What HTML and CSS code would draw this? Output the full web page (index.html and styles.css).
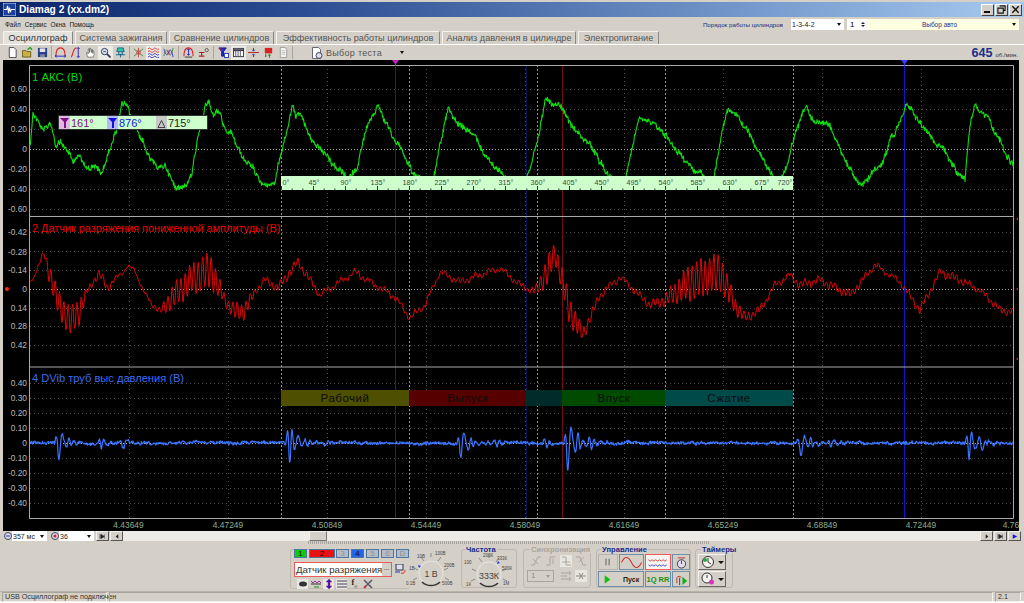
FILE: index.html
```html
<!DOCTYPE html>
<html lang="ru">
<head>
<meta charset="utf-8">
<title>Diamag 2 (xx.dm2)</title>
<link rel="stylesheet" href="styles.css">
</head>
<body>
<div class="app">
  <header class="titlebar">
    <svg class="appicon" viewBox="0 0 14 14"><rect width="14" height="14" fill="#1c3f9c" stroke="#dfe6f5"/><path d="M1 7h3l1-4 1 8 1-6 1 4 1-2h4" fill="none" stroke="#fff" stroke-width="1.2"/></svg>
    <span class="apptitle">Diamag 2 (xx.dm2)</span>
    <div class="winbtns">
      <span class="winbtn"><i class="w-min"></i></span>
      <span class="winbtn"><svg viewBox="0 0 10 10"><path d="M3 1h6v5H7M1 3.5h6V9H1z" fill="none" stroke="#111" stroke-width="1.2"/></svg></span>
      <span class="winbtn"><svg viewBox="0 0 10 10"><path d="M1.5 1.5l7 7M8.5 1.5l-7 7" stroke="#111" stroke-width="1.5"/></svg></span>
    </div>
  </header>

  <div class="menubar">
    <nav class="menu"><span>Файл</span><span>Сервис</span><span>Окна</span><span>Помощь</span></nav>
    <div class="menu-right">
      <span class="order-label">Порядок работы цилиндров</span>
      <span class="combo order"><b>1-3-4-2</b><i class="arrow"></i></span>
      <span class="spin"><b>1</b><span class="spinarrows"><i></i><i></i></span></span>
      <span class="auto"><b>Выбор авто</b><i class="arrow"></i></span>
    </div>
  </div>

  <div class="tabs">
    <span class="tab active w1">Осциллограф</span>
    <span class="tab w2">Система зажигания</span>
    <span class="tab w3">Сравнение цилиндров</span>
    <span class="tab w4">Эффективность работы цилиндров</span>
    <span class="tab w5">Анализ давления в цилиндре</span>
    <span class="tab w6">Электропитание</span>
  </div>

  <div class="toolbar">
    <span class="tb"><svg viewBox="0 0 12 12"><path d="M2.5 .5h5l2.5 2.5v8.500h-7.500z" fill="#fff" stroke="#444"/></svg></span>
    <span class="tb"><svg viewBox="0 0 12 12"><path d="M.5 4h4l1 1h4v6h-9z" fill="#c8b04a" stroke="#6b5a14"/><path d="M6 3l3-2.500 2 2.500" fill="none" stroke="#22a022" stroke-width="1.5"/></svg></span>
    <span class="tb"><svg viewBox="0 0 12 12"><path d="M1 1h10v10H1z" fill="#27408f"/><path d="M3 1.500h6v4H3z" fill="#e4e4e4"/><path d="M3.500 8h5v3h-5z" fill="#8a8a8a"/></svg></span>
    <i class="sep"></i>
    <span class="tb"><svg viewBox="0 0 12 12"><path d="M1 10C1 3 3 1 6 1s5 2 5 9" fill="none" stroke="#d22" stroke-width="1.2"/><path d="M0 10h12M1.500 8.500L0 10l1.500 1.500M10.500 8.500L12 10l-1.500 1.500" fill="none" stroke="#22c"/></svg></span>
    <span class="tb"><svg viewBox="0 0 12 12"><path d="M1 11C3 11 3 1 7 1" fill="none" stroke="#d22" stroke-width="1.2"/><path d="M9 .5v11M7.500 2L9 .5 10.500 2M7.500 10L9 11.500 10.500 10" fill="none" stroke="#22c"/></svg></span>
    <span class="tb"><svg viewBox="0 0 12 12"><path d="M3 11L1.500 6.500l1-.5 1 1.500V2l1 0 .5 4V1.500h1L7 6V2.500h1L8.500 7V4h1l.5 4-1 3z" fill="#fff" stroke="#555" stroke-width=".7"/></svg></span>
    <span class="tb on"><svg viewBox="0 0 12 12"><circle cx="5" cy="5" r="3.500" fill="#bfe4f5" stroke="#335"/><path d="M7.500 7.500l4 4" stroke="#335" stroke-width="1.8"/><path d="M3.500 5h3" stroke="#c22"/></svg></span>
    <span class="tb"><svg viewBox="0 0 12 12"><path d="M3 1h6l1 4H2z" fill="#30c8a8" stroke="#168"/><path d="M4 5v3h4V5M1 8.500h10M6 8v3.500" stroke="#168" fill="none"/></svg></span>
    <i class="sep"></i>
    <span class="tb"><svg viewBox="0 0 12 12"><path d="M1 2l10 8M11 2L1 10" stroke="#3a8a3a"/><path d="M6 1v10" stroke="#c44"/><circle cx="6" cy="6" r="2" fill="none" stroke="#c44"/></svg></span>
    <span class="tb on"><svg viewBox="0 0 12 12"><path d="M0 2q1.500-2 3 0t3 0 3 0 3 0M0 5q1.500-2 3 0t3 0 3 0 3 0" fill="none" stroke="#d33"/><path d="M0 8q1.500-2 3 0t3 0 3 0 3 0M0 11q1.500-2 3 0t3 0 3 0 3 0" fill="none" stroke="#33c"/></svg></span>
    <span class="tb"><svg viewBox="0 0 12 12"><path d="M1 10C2 2 5 2 6 6s3 5 5-5" fill="none" stroke="#3a8a3a"/><path d="M1 2c2 8 4 8 5 4s3-5 5 5" fill="none" stroke="#33c"/><circle cx="6" cy="6" r="1.500" fill="none" stroke="#c44"/></svg></span>
    <i class="sep wide"></i>
    <span class="tb"><svg viewBox="0 0 12 12"><path d="M1 10C1 3 3 1 6 1s5 2 5 9" fill="none" stroke="#d22" stroke-width="1.2"/><path d="M6 2v7M4.500 3.500L6 2l1.500 1.500M4.500 7.500L6 9l1.500-1.500" fill="none" stroke="#22c"/><path d="M2 11h8" stroke="#333"/></svg></span>
    <span class="tb"><svg viewBox="0 0 12 12"><path d="M1 6h6M1 10h6" stroke="#a22" stroke-width="1.2"/><path d="M4 6.500v3" stroke="#333"/><circle cx="9.500" cy="3.500" r="1.800" fill="none" stroke="#555"/></svg></span>
    <i class="sep wide"></i>
    <span class="tb"><svg viewBox="0 0 12 12"><path d="M1 1h8L6 5v5H4V5z" fill="#23c" stroke="#118"/><rect x="7" y="7" width="4.500" height="4.500" fill="#fff" stroke="#23c"/><path d="M1 1l3 3" stroke="#c22" stroke-width="1.2"/></svg></span>
    <span class="tb on"><svg viewBox="0 0 12 12"><rect x=".5" y="1.500" width="11" height="9" fill="#fff" stroke="#334"/><path d="M.5 3.500h11" stroke="#334" stroke-width="2"/><path d="M3 1.500v9M5.500 1.500v9M8 1.500v9" stroke="#556"/></svg></span>
    <span class="tb"><svg viewBox="0 0 12 12"><path d="M0 6h12" stroke="#a22"/><path d="M6 1v3M6 8v3M4.500 3L6 4.500 7.500 3M4.500 9L6 7.500 7.500 9" fill="none" stroke="#33a"/></svg></span>
    <span class="tb"><svg viewBox="0 0 12 12"><path d="M2 1h8v6H2z" fill="#d22"/><path d="M7 8v4M5.500 9.500L7 8l1.500 1.500" stroke="#282" fill="none"/><path d="M3 8v3" stroke="#333"/></svg></span>
    <span class="tb"><svg viewBox="0 0 12 12"><path d="M2.500 .5h5l2 2v9h-7z" fill="#f6f4ee" stroke="#999"/><path d="M4 4h4M4 6h4M4 8h4" stroke="#bbb"/></svg></span>
    <i class="sep"></i>
    <span class="testpick">
      <svg viewBox="0 0 12 12"><path d="M1.500 .5h6l2 2v9h-8z" fill="#fff" stroke="#667"/><circle cx="8" cy="8.500" r="3" fill="#dde" stroke="#445"/></svg>
      <b>Выбор теста</b><i class="arrow"></i>
    </span>
    <span class="rpm"><b>645</b><small>об./мин.</small></span>
  </div>

  <svg class="scope" viewBox="3 60 1016 471" preserveAspectRatio="none">
    <rect x="3" y="60" width="1016" height="471" fill="#000"/>
    <g id="grid"></g>
    <g class="cursors">
      <path class="yel" d="M281.5 65V518M409.5 65V518M537.5 65V518M665.5 65V518M793.5 65V518"/>
      <path stroke="#4a1055" d="M395.5 65V518"/>
      <path stroke="#0e0e55" d="M526.5 65V518"/>
      <path stroke="#701010" d="M562.5 65V518"/>
      <path stroke="#1414c8" d="M904.5 65V518"/>
    </g>
    <path d="M29.5 65.5H1013.5V518.5H29.5ZM29 216.5H1013M29 367H1013" fill="none" stroke="#a8a8a8"/>
    <path d="M392 60h7l-3 4v2h-1v-2z" fill="#c020c0"/>
    <path d="M901 60h7l-3 4v2h-1v-2z" fill="#3a3aff"/>

    <rect x="281" y="390" width="128" height="16" fill="#4f4f00"/>
    <rect x="409" y="390" width="117" height="16" fill="#560000"/>
    <rect x="526" y="390" width="36" height="16" fill="#002b2b"/>
    <rect x="562" y="390" width="103" height="16" fill="#004b00"/>
    <rect x="665" y="390" width="128" height="16" fill="#004a4a"/>
    <g class="phase">
      <text x="345" y="402">Рабочий</text>
      <text x="468" y="402">Выпуск</text>
      <text x="614" y="402">Впуск</text>
      <text x="729" y="402">Сжатие</text>
    </g>

    <polyline id="t1" class="trace green"/>
    <polyline id="t2" class="trace red"/>
    <polyline id="t3" class="trace blue"/>

    <g class="ptitle">
      <text x="32" y="81" fill="#00d800">1 АКС (В)</text>
      <text class="t-long" x="32" y="232" fill="#f00000">2 Датчик разряжения пониженной амплитуды (В)</text>
      <text class="t-mid" x="32" y="382" fill="#3a6cf0">4 DVib труб выс давления (В)</text>
    </g>

    <g class="ylab">
      <text x="27" y="92">0.60</text><text x="27" y="112">0.40</text><text x="27" y="132">0.20</text><text x="27" y="152">0</text><text x="27" y="172">-0.20</text><text x="27" y="192">-0.40</text><text x="27" y="212">-0.60</text>
      <text x="27" y="235">-0.42</text><text x="27" y="255">-0.28</text><text x="27" y="273">-0.14</text><text x="27" y="292">0</text><text x="27" y="311">0.14</text><text x="27" y="329">0.28</text><text x="27" y="348">0.42</text>
      <text x="27" y="386">0.40</text><text x="27" y="401">0.30</text><text x="27" y="416">0.20</text><text x="27" y="431">0.10</text><text x="27" y="446">0</text><text x="27" y="461">-0.10</text><text x="27" y="476">-0.20</text><text x="27" y="491">-0.30</text><text x="27" y="506">-0.40</text>
    </g>
    <g class="xlab">
      <text x="128.5" y="528">4.43649</text><text x="228" y="528">4.47249</text><text x="327" y="528">4.50849</text><text x="426" y="528">4.54449</text><text x="525" y="528">4.58049</text><text x="624" y="528">4.61649</text><text x="723" y="528">4.65249</text><text x="822" y="528">4.68849</text><text x="921" y="528">4.72449</text><text x="1011" y="528">4.76</text>
    </g>
    <circle cx="7" cy="289" r="2" fill="#ff2020"/>
    <path d="M1016 219l2-1.500v3zM1016 289l2-1.500v3zM1016 359l2-1.500v3z" fill="#d02020"/>

    <g id="scale"><rect x="281" y="176" width="512" height="14" fill="#ccffcc"/><path id="ticks" stroke="#333" fill="none"/></g>

    <rect x="58.5" y="115.5" width="149" height="14" fill="#ccffcc" stroke="#333"/>
    <rect x="59" y="116" width="11" height="13" fill="#e0b8e0"/>
    <rect x="107" y="116" width="11" height="13" fill="#b8b8f8"/>
    <rect x="156" y="116" width="11" height="13" fill="#c8c8c8"/>
    <path d="M60 118h9l-3 4v6h-2v-6z" fill="#801080"/>
    <path d="M108 118h9l-3 4v6h-2v-6z" fill="#1010e0"/>
    <path d="M158 127.5l3.500-7 3.500 7z" fill="none" stroke="#444"/>
    <g class="tagtext">
      <text x="71" y="127" fill="#801080">161°</text>
      <text x="119" y="127" fill="#1020e0">876°</text>
      <text x="168" y="127" fill="#222">715°</text>
    </g>
  </svg>

  <div class="scrollrow">
    <span class="ricon"><svg viewBox="0 0 8 8"><circle cx="4" cy="4" r="3.500" fill="#dde" stroke="#446"/><path d="M2 4h4" stroke="#33a"/></svg></span>
    <span class="combo c-time"><b>357 мс</b><i class="arrow"></i></span>
    <span class="ricon"><svg viewBox="0 0 8 8"><circle cx="4" cy="4" r="3.500" fill="#dde" stroke="#446"/><circle cx="4" cy="4" r="1.600" fill="#c22"/></svg></span>
    <span class="combo c-num"><b>36</b><i class="arrow"></i></span>
    <span class="sbtn"><svg viewBox="0 0 9 5"><path d="M1 0v5M6 0v5M6 2.500L2 0v5z" fill="#222" stroke="#222" stroke-width=".6"/></svg></span>
    <span class="sbtn"><svg viewBox="0 0 9 5"><path d="M6 0v5L3 2.500z" fill="#222"/></svg></span>
    <span class="track"><i class="thumb"></i></span>
    <span class="sbtn"><svg viewBox="0 0 9 5"><path d="M3 0v5l3-2.500z" fill="#222"/></svg></span>
    <span class="sbtn"><svg viewBox="0 0 9 5"><path d="M8 0v5M3 0v5M3 2.500L7 0v5z" fill="#222" stroke="#222" stroke-width=".6" transform="matrix(-1 0 0 1 9 0)"/></svg></span>
    <span class="sbtn"><svg viewBox="0 0 9 5"><path d="M2 0v5l5-2.500z" fill="#1414e0"/></svg></span>
  </div>

  <div class="controls">
    <div class="strip"><i></i></div>
    <div class="groups">
      <div class="gbox g-chan">
        <div class="chans">
          <span class="chan c1">1</span><span class="chan c2">2</span><span class="chan off c3">3</span><span class="chan c4">4</span><span class="chan off c5">5</span><span class="chan off c6">6</span><span class="chan off c7">D</span>
        </div>
        <div class="sensor">
          <span class="sensorbox"><b>Датчик разряжения</b><i class="dots">...</i></span>
          <svg class="sicon" viewBox="0 0 11 11"><rect x="1" y="0" width="7" height="6" fill="#dde" stroke="#334"/><path d="M0 8h5" stroke="#23c"/><path d="M6 9c3 1 4-1 4-3" fill="none" stroke="#d22"/></svg>
        </div>
        <div class="chantools">
          <span class="ct lit"><svg viewBox="0 0 10 10"><ellipse cx="5" cy="5" rx="4" ry="2.500" fill="#333"/></svg></span>
          <span class="ct"><svg viewBox="0 0 10 10"><path d="M0 2l2 2 2-2 2 2 2-2 2 2" fill="none" stroke="#a030a0"/><path d="M0 5h10" stroke="#333"/><path d="M3 8h5" stroke="#282"/></svg></span>
          <span class="ct lit"><svg viewBox="0 0 10 10"><path d="M5 0l3 3H6v4h2l-3 3-3-3h2V3H2z" fill="#2020c0" stroke="#c02060" stroke-width=".5"/></svg></span>
          <span class="ct lit"><svg viewBox="0 0 10 10"><path d="M0 2h10M0 5h10M0 8h10" stroke="#445"/></svg></span>
          <span class="ct"><em>f<sub>∞</sub></em></span>
          <span class="ct"><svg viewBox="0 0 10 10"><path d="M1 1l8 8M9 1L1 9" stroke="#556" stroke-width="1.5"/><circle cx="2" cy="8" r="1.200" fill="#c33"/></svg></span>
        </div>
      </div>
      <div class="knob k1">
        <svg viewBox="0 0 50 40">
          <g class="ticks"><path d="M7 31l4-2M8 19l4 2M15 8l3 4M25 4v4M35 8l-3 4M42 19l-4 2M43 31l-4-2"/></g>
          <path d="M17 33a12 12 0 1 1 16 0" fill="#d4d0c8" stroke="#e8e6e0" stroke-width="1"/>
          <path d="M16 33a13 13 0 0 0 18 0" fill="none" stroke="#333" stroke-width="1.5"/>
          <path d="M15 17l-3-1 1 3z" fill="#1a3ae0"/>
          <text class="kc" x="25" y="28">1 В</text>
          <text class="kl" x="0" y="36">0.1В</text><text class="kl" x="3" y="21">1В</text><text class="kl" x="11" y="9">10В</text><text class="kl" x="29" y="6">100В</text><text class="kl" x="38" y="18">200В</text><text class="kl" x="36" y="36">500В</text>
        </svg>
      </div>
      <fieldset class="gbox g-freq">
        <legend class="gtitle">Частота</legend>
        <div class="knob k2">
          <svg viewBox="0 0 50 40">
            <g class="ticks"><path d="M7 31l4-2M8 19l4 2M15 8l3 4M25 4v4M35 8l-3 4M42 19l-4 2M43 31l-4-2"/></g>
            <path d="M17 33a12 12 0 1 1 16 0" fill="#d4d0c8" stroke="#e8e6e0"/>
            <path d="M16 33a13 13 0 0 0 18 0" fill="none" stroke="#333" stroke-width="1.5"/>
            <path d="M33 14l1-3 2 2z" fill="#1a3ae0"/>
            <text class="kc" x="25" y="29">333К</text>
            <text class="kl" x="2" y="36">1К</text><text class="kl" x="0" y="14">100</text><text class="kl" x="19" y="7">200К</text><text class="kl" x="33" y="10">333К</text><text class="kl" x="38" y="20">500К</text><text class="kl" x="39" y="35">1М</text>
          </svg>
        </div>
      </fieldset>
      <fieldset class="gbox g-sync">
        <legend class="gtitle dim">Синхронизация</legend>
        <div class="syncrow">
          <span class="si"><svg viewBox="0 0 10 10"><path d="M0 9h3L7 1h3M2 3l5 5" fill="none" stroke="#aaa6a0"/></svg></span>
          <span class="si"><svg viewBox="0 0 10 10"><path d="M0 9h4V1h5M7 3v5" fill="none" stroke="#aaa6a0"/></svg></span>
          <span class="si lit"><svg viewBox="0 0 10 10"><path d="M1 1h4v8h5M1 6h8" fill="none" stroke="#aaa6a0"/></svg></span>
          <span class="si"><svg viewBox="0 0 10 10"><path d="M0 1h4l3 8h3M3 6l5-5" fill="none" stroke="#aaa6a0"/></svg></span>
        </div>
        <div class="syncrow low">
          <span class="sel">1<i class="arrow dimarrow"></i></span>
          <span class="si"><svg viewBox="0 0 10 10"><path d="M0 2h10M0 5h6M0 8h10M8 0l2 2-2 2M8 6l2 2-2 2" fill="none" stroke="#aaa6a0"/></svg></span>
          <span class="si lit"><svg viewBox="0 0 10 10"><path d="M0 5h10M3 2l2 3-2 3M7 2L5 5l2 3" fill="none" stroke="#8d8983"/></svg></span>
        </div>
      </fieldset>
      <fieldset class="gbox g-ctl">
        <legend class="gtitle">Управление</legend>
        <div class="ctlgrid">
          <span class="cb pause"><svg viewBox="0 0 10 10"><path d="M2.500 1v8M6.500 1v8" stroke="#888" stroke-width="2"/></svg></span>
          <span class="cb sine"><svg viewBox="0 0 22 12"><path d="M0 6q5.500-11 11 0t11 0" fill="none" stroke="#c83030" stroke-width="1.1"/></svg></span>
          <span class="cb wave"><svg viewBox="0 0 22 12"><path d="M0 3l2 1.500 2-1.500 2 1.500 2-1.500 2 1.500 2-1.500 2 1.500 2-1.500 2 1.500 2-1.500" fill="none" stroke="#c83030" stroke-width=".9"/><path d="M0 8.500l2 1.500 2-1.500 2 1.500 2-1.500 2 1.500 2-1.500 2 1.500 2-1.500 2 1.500 2-1.500" fill="none" stroke="#3030c8" stroke-width=".9"/></svg></span>
          <span class="cb tim"><svg viewBox="0 0 14 14"><circle cx="7" cy="8.500" r="4.500" fill="#dde" stroke="#334"/><path d="M7 8.500V5" stroke="#23c"/><path d="M3 2h8" stroke="#b33"/></svg></span>
          <span class="cb start"><svg viewBox="0 0 10 14"><path d="M1 1l8 6-8 6z" fill="#12c012"/></svg><b>Пуск</b></span>
          <span class="cb rr"><b>1Q RR</b></span>
          <span class="cb tim"><svg viewBox="0 0 14 14"><path d="M2 11V5a3 3 0 0 1 5 0" fill="none" stroke="#b33"/><path d="M5 5v8" stroke="#23c"/><path d="M8 4l5 4.500-5 4.500z" fill="#12b012"/></svg></span>
        </div>
      </fieldset>
      <fieldset class="gbox g-tim">
        <legend class="gtitle">Таймеры</legend>
        <span class="tbtn"><svg viewBox="0 0 14 14"><circle cx="7" cy="7" r="5.500" fill="#f4f4ee" stroke="#333"/><path d="M7 7V3M7 7l3 2" stroke="#333"/><circle cx="4" cy="5" r="2" fill="#28a050"/></svg><i class="arrow"></i></span>
        <span class="tbtn"><svg viewBox="0 0 14 14"><circle cx="6" cy="6" r="5" fill="#f4f4ee" stroke="#333"/><path d="M6 6V3" stroke="#333"/><circle cx="10.500" cy="10" r="2.500" fill="#e030c0"/></svg><i class="arrow"></i></span>
      </fieldset>
    </div>
  </div>

  <footer class="status">
    <span class="st s1">USB Осциллограф не подключен</span>
    <span class="st s2"></span>
    <span class="st s3">2.1</span>
  </footer>
</div>
<script src="script.js"></script>
</body>
</html>
```
FILE: styles.css
```css
* { box-sizing: border-box; }
html, body { margin: 0; padding: 0; background: #fff; }
body { width: 1024px; height: 603px; overflow: hidden; font-family: "Liberation Sans", Arial, sans-serif; }
i, em { font-style: normal; }
b { font-weight: normal; }
svg { display: block; }

.app { width: 1024px; height: 601px; display: flex; flex-direction: column; background: #d4d0c8; padding-top: 2px; }

.titlebar { flex: 0 0 15px; display: flex; align-items: center; background: linear-gradient(90deg, #0a246a 0%, #2c4d92 30%, #6f93c6 70%, #a6caf0 100%); padding: 0 2px 0 3px; }
.appicon { width: 13px; height: 13px; margin-right: 3px; }
.apptitle { color: #fff; font-weight: bold; font-size: 10.2px; }
.winbtns { margin-left: auto; display: flex; gap: 1px; }
.winbtn { width: 13px; height: 12px; background: #d4d0c8; border: 1px solid; border-color: #fff #404040 #404040 #fff; display: flex; align-items: center; justify-content: center; }
.winbtn svg { width: 9px; height: 9px; }
.w-min { width: 6px; height: 2px; background: #111; margin-top: 5px; margin-left: -2px; }

.menubar { flex: 0 0 14px; display: flex; align-items: center; padding: 0 5px; }
.menu { display: flex; gap: 4px; font-size: 6.4px; color: #222; }
.menu-right { margin-left: auto; display: flex; align-items: center; height: 11px; }
.order-label { font-size: 6.2px; color: #1a2a80; margin-right: 8px; }
.combo { display: flex; align-items: center; background: #fff; font-size: 7px; padding-left: 1px; color: #222; }
.combo b { flex: 1; white-space: nowrap; }
.combo.order { width: 53px; height: 11px; }
.arrow { display: block; width: 0; height: 0; border: 2px solid transparent; border-top: 3px solid #111; border-bottom: 0; margin-right: 3px; }
.spin { width: 20px; height: 11px; margin-left: 3px; background: #fff; font-size: 8px; display: flex; align-items: center; padding-left: 3px; }
.spin b { flex: 1; }
.spinarrows { display: flex; flex-direction: column; gap: 1px; margin-right: 2px; }
.spinarrows i { display: block; border: 2px solid transparent; border-bottom: 2px solid #222; border-top: 0; }
.spinarrows i + i { border-bottom: 0; border-top: 2px solid #222; }
.auto { width: 152px; height: 11px; background: #ffffe1; font-size: 6.5px; color: #223088; display: flex; align-items: center; }
.auto b { flex: 1; text-align: center; }

.tabs { flex: 0 0 14px; display: flex; gap: 2px; padding-left: 3px; align-items: flex-end; border-bottom: 1px solid #fff; }
.tab { height: 13px; font-size: 9.15px; line-height: 13px; text-align: center; color: #555; background: #d4d0c8; border: 1px solid #f4f2ec; border-right-color: #888; border-bottom: 0; white-space: nowrap; overflow: hidden; }
.tab.active { color: #333; background: #e4e2dc; }
.w1 { width: 70px; } .w2 { width: 92px; } .w3 { width: 105px; } .w4 { width: 164px; } .w5 { width: 134px; } .w6 { width: 81px; }

.toolbar { flex: 0 0 15px; display: flex; align-items: center; padding-left: 5px; }
.tb { width: 15px; height: 14px; display: flex; align-items: center; justify-content: center; }
.tb svg { width: 11px; height: 11px; }
.tb.on { background: #ecebe6; }
.sep { width: 3px; height: 13px; flex: none; display: flex; justify-content: center; }
.sep::after { content: ""; width: 1px; background: #aaa69e; }
.sep.wide { width: 5px; }
.testpick { display: flex; align-items: center; margin-left: 17px; width: 96px; font-size: 9px; color: #555; letter-spacing: .3px; }
.testpick svg { width: 12px; height: 12px; margin-right: 3px; }
.testpick b { flex: 1; }
.rpm { margin-left: auto; margin-right: 6px; display: flex; align-items: baseline; color: #1c2d8a; }
.rpm b { font-size: 12.5px; font-weight: bold; }
.rpm small { font-size: 6px; margin-left: 3px; color: #333; }

.scope { flex: 0 0 471px; width: 1016px; margin-left: 3px; height: 471px; }
#grid path { fill: none; stroke: #4c4c4c; stroke-dasharray: 1 3; }
#grid path.zero { stroke: #a8a8a8; stroke-dasharray: 1 2; }
.cursors path { fill: none; stroke-width: 1; }
.cursors .yel { stroke: #a0a030; stroke-dasharray: 2 2; }
.trace { fill: none; stroke-linejoin: round; }
.green { stroke: #12dc12; stroke-width: 1.1; }
.red { stroke: #e00808; stroke-width: 1; }
.blue { stroke: #3a74ff; stroke-width: 1.2; }
.phase text { font-size: 11.5px; letter-spacing: .5px; text-anchor: middle; fill: #0c0c0c; }
.ptitle text { font-size: 11.4px; }
.ptitle .t-long { font-size: 10.9px; }
.ptitle .t-mid { font-size: 11.1px; }
.ylab text { font-size: 8.4px; text-anchor: end; fill: #b8b8b8; }
.xlab text { font-size: 8.4px; text-anchor: middle; fill: #8fae8f; }
.tagtext text { font-size: 11px; }
.scale-label { font-size: 7.2px; fill: #444; text-anchor: middle; }

.scrollrow { flex: 0 0 10px; display: flex; background: #d4d0c8; padding-left: 3px; padding-right: 3px; align-items: stretch; }
.ricon { width: 9px; display: flex; align-items: center; justify-content: center; }
.ricon svg { width: 8px; height: 8px; }
.c-time { width: 35px; margin-right: 3px; }
.c-num { width: 35px; margin-right: 2px; }
.sbtn { width: 13px; background: #d4d0c8; border: 1px solid; border-color: #f4f2ec #555 #555 #f4f2ec; display: flex; align-items: center; justify-content: center; }
.sbtn svg { width: 8px; height: 5px; }
.sbtn + .sbtn { margin-left: 1px; }
.track { flex: 1; background: #ecebe5; display: flex; }
.thumb { width: 18px; margin-left: 186px; background: #d4d0c8; border: 1px solid; border-color: #f4f2ec #777 #777 #f4f2ec; }

.controls { flex: 0 0 48px; display: flex; flex-direction: column; }
.strip { height: 4px; padding-left: 308px; }
.strip i { display: block; width: 402px; height: 3px; background: repeating-linear-gradient(90deg, #a8a59e 0 1px, #d4d0c8 1px 2px); }
.groups { display: flex; padding-left: 290px; height: 44px; align-items: flex-start; }
.gbox { margin: 0; padding: 0; border: 1px solid #bdb9b0; border-radius: 3px; min-width: 0; }
.gtitle { font-size: 7.6px; font-weight: bold; color: #1c2d8a; padding: 0 1px; margin-left: 3px; line-height: 7px; white-space: nowrap; }
.gtitle.dim { color: #a8a49c; }

.g-chan { width: 120px; height: 40px; margin-top: 4px; padding-left: 3px; border-right: 0; }
.chans { display: flex; gap: 2px; margin-top: -1px; height: 9px; }
.chan { width: 13px; font-size: 8px; line-height: 8px; text-align: center; border: 1px solid #4e77a0; color: #111; }
.c1 { background: #10c810; }
.c2 { width: 26px; background: #e81010; margin-right: -1px; }
.c4 { background: #2464e8; }
.off { background: #b5bcc4; color: #8c9098; }
.sensor { display: flex; align-items: center; margin-top: 4px; }
.sensorbox { width: 98px; height: 15px; border: 1px solid #ee5a5a; background: #fff; display: flex; align-items: center; font-size: 9.6px; color: #333; padding-left: 1px; white-space: nowrap; }
.sensorbox b { flex: 1; }
.dots { width: 9px; height: 13px; background: #d4d0c8; font-size: 7px; line-height: 9px; text-align: center; }
.sicon { width: 11px; height: 11px; margin-left: 3px; }
.chantools { display: flex; gap: 2px; margin: 2px 0 0 3px; }
.ct { width: 11px; height: 10px; display: flex; align-items: center; justify-content: center; }
.ct.lit { background: #e8e6e0; }
.ct svg { width: 10px; height: 10px; }
.ct em { font-family: "Liberation Serif", serif; font-size: 8px; font-weight: bold; line-height: 8px; color: #222; }
.ct sub { font-size: 5px; line-height: 4px; }

.knob { width: 50px; height: 40px; flex: none; }
.knob svg { width: 50px; height: 40px; }
.k1 { margin: 4px 0 0 -4px; }
.ticks path { stroke: #888; fill: none; }
.kc { font-size: 8.8px; text-anchor: middle; fill: #444; }
.kl { font-size: 4.5px; fill: #444; }

.g-freq { width: 56px; height: 42px; margin-left: 5px; margin-top: 1px; }
.k2 { margin: -3px 0 0 2px; }
.g-sync { width: 68px; height: 42px; margin-left: 6px; margin-top: 1px; padding: 2px 2px 0 3px; }
.syncrow { display: flex; gap: 3px; height: 12px; align-items: center; padding-left: 3px; }
.syncrow.low { margin-top: 3px; padding-left: 0; }
.si { width: 12px; height: 12px; display: flex; align-items: center; justify-content: center; }
.si svg { width: 10px; height: 10px; }
.si.lit { background: #e8e6e0; }
.sel { width: 27px; height: 12px; margin-right: 3px; border: 1px solid #aaa69e; font-size: 8px; line-height: 10px; color: #888; padding-left: 3px; display: flex; align-items: center; justify-content: space-between; }
.dimarrow { border-top-color: #999; }

.g-ctl { width: 95px; height: 42px; margin-left: 5px; margin-top: 1px; padding: 1px 0 0 1px; }
.ctlgrid { display: grid; grid-template-columns: 20px 25px 26px 18px; grid-auto-rows: 16px; gap: 1px; }
.cb { display: flex; align-items: center; justify-content: center; background: #d4d0c8; border: 1px solid #6f8fa8; }
.cb svg { max-width: 100%; }
.pause { border-color: #b8b4ac; }
.pause svg { width: 8px; height: 10px; }
.sine svg, .wave svg { width: 21px; height: 11px; }
.wave { border-color: #ee5a5a; background: #f6f4f0; }
.tim svg { width: 13px; height: 13px; }
.start { grid-column: 1 / span 2; justify-content: flex-start; padding-left: 5px; font-size: 7px; font-weight: bold; color: #222; gap: 12px; }
.start svg { width: 7px; height: 11px; }
.start b { font-weight: bold; }
.rr { font-size: 7.5px; color: #169016; white-space: nowrap; }
.rr b { font-weight: bold; }

.g-tim { width: 38px; height: 42px; margin-left: 4px; margin-top: 1px; padding: 1px 0 0 2px; }
.tbtn { display: flex; align-items: center; gap: 3px; width: 28px; height: 16px; padding-left: 2px; margin-bottom: 1px; border: 1px solid; border-color: #f4f2ec #666 #666 #f4f2ec; }
.tbtn svg { width: 14px; height: 14px; flex: none; }
.tbtn .arrow { border-left-width: 3px; border-right-width: 3px; border-top-width: 3px; }

.status { margin-top: 2px; flex: 0 0 10px; display: flex; gap: 2px; padding: 0 3px 0 2px; border-top: 1px solid #b8b4ac; }
.st { border: 1px solid; border-color: #a8a49c #f4f2ec #f4f2ec #a8a49c; font-size: 7.2px; line-height: 8px; color: #333; white-space: nowrap; padding-left: 2px; }
.s1 { width: 105px; }
.s2 { flex: 1; }
.s3 { width: 26px; }
```
FILE: script.js
```js
(function () {
  var NS = 'http://www.w3.org/2000/svg';
  var seed = 12345;
  function rnd() { seed = (seed * 1103515245 + 12345) & 0x7fffffff; return seed / 0x7fffffff; }
  function lerp(pts, x) {
    for (var i = 1; i < pts.length; i++) {
      if (x <= pts[i][0]) {
        var a = pts[i - 1], b = pts[i], t = (x - a[0]) / (b[0] - a[0]);
        return [a[1] + (b[1] - a[1]) * t, (a[2] || 0) + ((b[2] || 0) - (a[2] || 0)) * t];
      }
    }
    var l = pts[pts.length - 1];
    return [l[1], l[2] || 0];
  }

  /* Angle scale and grid */
  var grid = document.getElementById('grid');
  var d = '';
  [129, 228, 327, 426, 525, 624, 723, 822, 921].forEach(function (x) { d += 'M' + (x + .5) + ' 65V518'; });
  [89, 109, 129, 169, 189, 209, 232, 251, 270, 308, 326, 345, 383, 398, 413, 428, 458, 473, 488, 503].forEach(function (y) { d += 'M30 ' + (y + .5) + 'H1013'; });
  var p = document.createElementNS(NS, 'path');
  p.setAttribute('d', d);
  grid.appendChild(p);
  var z = document.createElementNS(NS, 'path');
  z.setAttribute('class', 'zero');
  z.setAttribute('d', 'M30 149.5H1013M30 289.5H1013M30 443.5H1013');
  grid.appendChild(z);

  var scale = document.getElementById('scale');
  var ticks = '';
  for (var a = 0; a <= 720; a += 45) {
    var tx = 281 + a * 128 / 180;
    ticks += 'M' + (tx + .5) + ' 186V190';
    var lab = document.createElementNS(NS, 'text');
    lab.setAttribute('class', 'scale-label');
    lab.setAttribute('x', a === 0 ? 286 : a === 720 ? 785 : tx + 1);
    lab.setAttribute('y', 185);
    lab.textContent = a + '°';
    scale.appendChild(lab);
  }
  for (a = 0; a < 720; a += 15) {
    if (a % 45) ticks += 'M' + (281 + a * 128 / 180 + .5) + ' 188.5V190';
  }
  document.getElementById('ticks').setAttribute('d', ticks);

  /* Green: AKS trace */
  var g = [[30, 146], [33, 112], [37, 118], [42, 126], [46, 127], [50, 122], [54, 135], [56, 148], [60, 143], [64, 147], [68, 152], [73, 163], [80, 157], [85, 165], [90, 168], [95, 165], [101, 175], [108, 155], [113, 137], [118, 122], [122, 104], [126, 106], [130, 118], [135, 128], [140, 135], [146, 150], [152, 158], [158, 168], [165, 165], [170, 175], [176, 188], [181, 183], [188, 180], [192, 172], [195, 150], [200, 125], [205, 101], [209, 102], [212, 115], [220, 116], [226, 135], [232, 136], [238, 150], [245, 160], [252, 170], [260, 178], [267, 185], [275, 184], [278, 165], [282, 150], [287, 130], [292, 108], [296, 120], [300, 112], [310, 135], [320, 150], [328, 158], [340, 170], [348, 183], [356, 170], [366, 130], [378, 100], [388, 125], [402, 150], [415, 178], [432, 185], [440, 145], [448, 110], [458, 122], [470, 132], [485, 155], [505, 178], [520, 186], [530, 172], [540, 130], [545, 96], [552, 108], [560, 105], [570, 125], [590, 145], [610, 175], [625, 182], [632, 150], [640, 112], [652, 118], [665, 132], [685, 160], [700, 172], [712, 186], [720, 140], [728, 105], [738, 118], [752, 140], [765, 165], [778, 182], [785, 170], [795, 140], [805, 107], [815, 122], [830, 130], [850, 170], [860, 187], [880, 165], [895, 130], [908, 105], [925, 128], [945, 150], [958, 178], [965, 180], [970, 125], [975, 106], [990, 125], [1005, 155], [1013, 163]];
  var out = [];
  var walk = 0;
  for (var x = 30; x <= 1013; x += .5) {
    walk = walk * .93 + (rnd() - .5) * 2.6;
    out.push(x + ',' + (lerp(g, x)[0] + walk + (rnd() - .5) * 5).toFixed(1));
  }
  document.getElementById('t1').setAttribute('points', out.join(' '));

  /* Red: spark sensor trace, [x, y, oscillation amplitude] */
  var r = [[30, 282, 0], [37, 270, 1], [44, 253, 2], [50, 275, 10], [57, 300, 12], [70, 322, 14], [80, 310, 12], [88, 290, 2], [95, 278, 3], [100, 275, 4], [108, 288, 3], [115, 280, 2], [127, 267, 1], [135, 270, 1], [145, 295, 1], [160, 312, 3], [170, 300, 10], [190, 280, 14], [210, 270, 18], [225, 300, 4], [235, 312, 8], [245, 310, 8], [256, 290, 2], [265, 280, 3], [278, 288, 3], [290, 272, 4], [298, 262, 3], [310, 280, 3], [320, 295, 2], [335, 285, 2], [355, 272, 2], [375, 285, 2], [395, 297, 2], [410, 318, 2], [425, 305, 2], [440, 272, 2], [460, 282, 2], [480, 275, 2], [500, 268, 2], [520, 285, 2], [535, 292, 3], [548, 270, 14], [555, 252, 10], [570, 312, 14], [583, 335, 6], [600, 295, 3], [620, 277, 2], [650, 305, 3], [665, 300, 5], [690, 282, 18], [720, 272, 18], [735, 305, 8], [745, 318, 4], [760, 310, 3], [775, 285, 2], [790, 275, 2], [800, 285, 3], [820, 280, 3], [850, 295, 3], [875, 265, 2], [900, 282, 2], [920, 310, 3], [940, 272, 3], [960, 280, 3], [980, 290, 2], [1000, 310, 3], [1013, 312, 2]];
  out = [];
  for (x = 30; x <= 1013; x += .5) {
    var v = lerp(r, x);
    out.push(x + ',' + (v[0] + Math.sin(x * 1.45) * v[1] + Math.sin(x * .42) * 2 + (rnd() - .5) * 1.6).toFixed(1));
  }
  document.getElementById('t2').setAttribute('points', out.join(' '));

  /* Blue: decaying irregular bursts on a noisy baseline */
  var bursts = [[58, 20, 8], [100, 6, 7], [122, 7, 7], [288, 24, 10], [323, 3, 4], [460, 17, 11], [495, 5, 6], [545, 7, 5], [567, 34, 9], [590, 8, 8], [800, 15, 11], [830, 5, 7], [968, 19, 11], [982, 5, 6]];
  var slow = 0;
  out = [];
  for (x = 30; x <= 1013; x += .5) {
    slow = slow * .8 + (rnd() - .5) * 1.4;
    var y = 443 + slow + (rnd() - .5) * 2.4;
    bursts.forEach(function (b) {
      var dx = x - b[0];
      if (dx > -4) {
        var env = dx < 0 ? (dx + 4) / 4 : Math.exp(-dx / b[2]);
        y += b[1] * env * Math.sin(dx * 1.05 + .8 * Math.sin(dx * .37 + b[0])) * (.75 + .25 * Math.sin(dx * .7));
      }
    });
    out.push(x + ',' + y.toFixed(1));
  }
  document.getElementById('t3').setAttribute('points', out.join(' '));
})();
```
